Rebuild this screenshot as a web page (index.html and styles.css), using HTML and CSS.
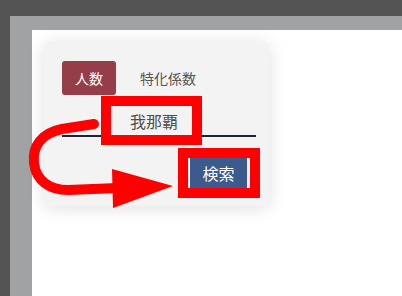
FILE: index.html
```html
<!DOCTYPE html>
<html lang="ja">
<head>
    <meta charset="UTF-8">
    <meta name="viewport" content="width=device-width, initial-scale=1.0">
    <title>検索</title>
    <link rel="stylesheet" href="styles.css">
</head>
<body>
    <div class="frame">
        <div class="page">
            <div class="card">
                <div class="tabs">
                    <span class="tab active">人数</span>
                    <span class="tab">特化係数</span>
                </div>
                <input class="search" type="text" value="我那覇">
                <div class="actions">
                    <button class="btn">検索</button>
                </div>

                <!-- annotations -->
                <div class="mark mark-input"></div>
                <div class="mark mark-btn"></div>
                <svg class="arrow" viewBox="20 110 160 105" width="160" height="105">
                    <path d="M94 124 L62 129 C42 133 32 146 34 163 C36 181 50 190 68 190 L118 188"
                          fill="none" stroke="#ff0000" stroke-width="10" stroke-linecap="round"/>
                    <polygon points="112,169 113,208 173,186" fill="#ff0000"/>
                </svg>
            </div>
        </div>
    </div>
</body>
</html>
```

FILE: styles.css
```css
body { margin: 0; background-color: #545454; font-family: "Noto Sans CJK JP", "Noto Sans", sans-serif; }
.frame { margin: 16px 0 0 10px; padding: 14px 0 0 22px; background-color: #a1a2a4; height: 280px; box-sizing: border-box; }
.page { background-color: #fff; height: 266px; padding: 12px 0 0 12px; box-sizing: border-box; }
.card { position: relative; width: 225px; height: 164px; box-sizing: border-box; padding: 19px 13px 0 18px; background-color: #f3f3f3; border-radius: 5px; box-shadow: 0 2px 18px rgba(0, 0, 0, 0.13); }
.tabs { display: flex; gap: 11px; height: 34px; }
.tab { display: flex; align-items: center; padding: 0 13px; font-size: 14px; color: #555; border-radius: 3px; }
.tab.active { background-color: #963d4a; color: #fff; }
.search { display: block; width: 100%; height: 30px; margin-top: 12px; box-sizing: border-box; border: none; border-bottom: 2px solid #1c2335; background: transparent; padding: 0 0 0 68px; font-family: inherit; font-size: 16px; color: #505050; outline: none; }
.actions { display: flex; justify-content: flex-end; margin-top: 21px; padding-right: 7px; }
.btn { width: 61px; height: 30px; padding: 0; border: none; border-left: 2px solid #eef0f4; border-right: 2px solid #eef0f4; background-color: #3d5a8c; color: #fff; font-family: inherit; font-size: 16px; }
.mark { position: absolute; border: 10px solid #ff0000; box-sizing: border-box; }
.mark-input { left: 57px; top: 54px; width: 101px; height: 49px; }
.mark-btn { left: 134px; top: 106px; width: 82px; height: 50px; }
.arrow { position: absolute; left: -24px; top: 68px; }
```
